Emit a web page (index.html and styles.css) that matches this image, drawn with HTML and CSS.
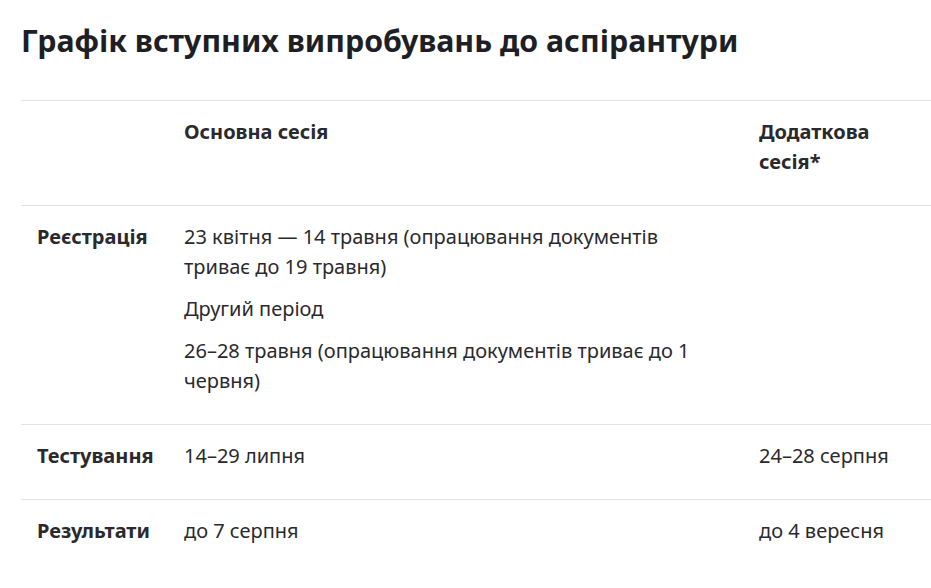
FILE: index.html
```html
<!DOCTYPE html>
<html lang="uk">
<head>
<meta charset="utf-8">
<link rel="stylesheet" href="styles.css">
</head>
<body>
<main class="page">
  <h1 class="title">Графік вступних випробувань до аспірантури</h1>
  <table class="schedule">
    <colgroup>
      <col class="c1"><col class="c2"><col class="c3">
    </colgroup>
    <thead>
      <tr>
        <th></th>
        <th>Основна сесія</th>
        <th>Додаткова сесія*</th>
      </tr>
    </thead>
    <tbody>
      <tr>
        <th>Реєстрація</th>
        <td>
          <p>23 квітня — 14 травня (опрацювання документів триває до 19 травня)</p>
          <p>Другий період</p>
          <p>26–28 травня (опрацювання документів триває до 1 червня)</p>
        </td>
        <td></td>
      </tr>
      <tr>
        <th>Тестування</th>
        <td><p>14–29 липня</p></td>
        <td><p>24–28 серпня</p></td>
      </tr>
      <tr>
        <th>Результати</th>
        <td><p>до 7 серпня</p></td>
        <td><p>до 4 вересня</p></td>
      </tr>
    </tbody>
  </table>
</main>
</body>
</html>
```
FILE: styles.css
```css
html, body {
  margin: 0;
  padding: 0;
  background: #fff;
}
body {
  font-family: "Noto Sans", "Open Sans", sans-serif;
  color: #2a2a2e;
}
.page {
  padding: 21px 0 0 21px;
}
.title {
  margin: 0 0 39px;
  font-size: 30.3px;
  line-height: 40px;
  font-weight: 700;
  color: #1e1f24;
}
.schedule {
  width: 910px;
  border-collapse: collapse;
  table-layout: fixed;
}
.c1 { width: 147px; }
.c2 { width: 575px; }
.c3 { width: 188px; }
.schedule tr {
  border-top: 1px solid #dfe1e6;
}
.schedule th,
.schedule td {
  text-align: left;
  vertical-align: top;
  padding: 16px 16px 28px;
  font-size: 20px;
  line-height: 30px;
}
.schedule th {
  font-weight: 700;
}
.schedule td {
  font-weight: 400;
}
.schedule p {
  margin: 0 0 12px;
}
.schedule p:last-child {
  margin-bottom: 0;
}
```
